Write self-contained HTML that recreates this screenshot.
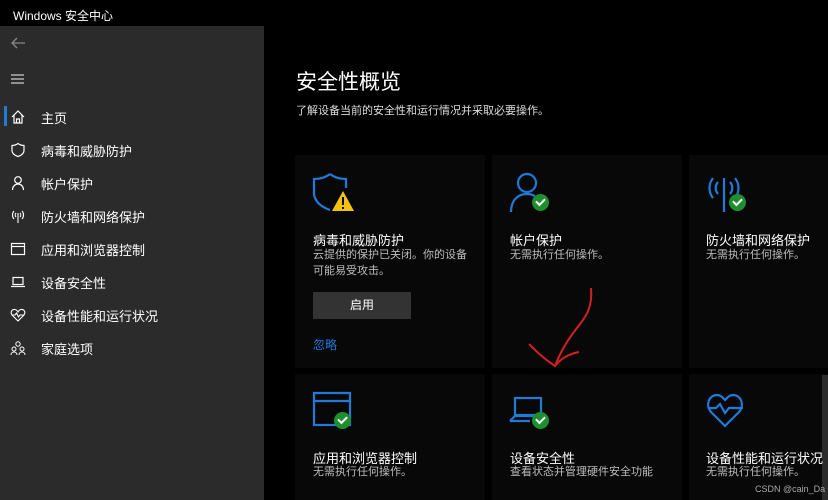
<!DOCTYPE html>
<html><head><meta charset="utf-8"><style>
*{margin:0;padding:0;box-sizing:border-box}
body{width:828px;height:500px;background:#000;overflow:hidden;position:relative;font-family:"Liberation Sans","Noto Sans CJK SC",sans-serif;color:#fff}
.tb{position:absolute;left:0;top:0;width:828px;height:26px;background:#000;font-size:12px;padding:7px 0 0 13px}
.sb{position:absolute;left:0;top:26px;width:264px;height:474px;background:#2b2b2b}
.nav{position:absolute;left:0;font-size:13px;color:#fff;width:264px;height:20px}
.nav svg{position:absolute;left:10px;top:2px}
.nav span{position:absolute;left:41px;top:1px}
.card{position:absolute;background:#080808}
.h{position:absolute;font-size:13px;color:#fff}
.s{position:absolute;font-size:11px;color:#bdbdbd;line-height:16px}
.ok{position:absolute;width:17px;height:17px;border-radius:50%;background:#1e8f2e}
.ok:after{content:"";position:absolute;left:4px;top:4px;width:7px;height:4px;border-left:2px solid #fff;border-bottom:2px solid #fff;transform:rotate(-45deg)}
</style></head><body>
<div class="tb">Windows 安全中心</div>
<div class="sb">
<svg style="position:absolute;left:10px;top:10px" width="16" height="14" viewBox="0 0 16 14"><path d="M15 7H2M7 2L2 7l5 5" stroke="#888" stroke-width="1.3" fill="none"/></svg>
<svg style="position:absolute;left:11px;top:48px" width="14" height="10"><path d="M0 1h13M0 5h13M0 9h13" stroke="#ccc" stroke-width="1.2"/></svg>
<div style="position:absolute;left:4px;top:80px;width:3px;height:20px;background:#1f7ad8"></div>
</div>
<div class="nav" style="top:107px"><svg width="16" height="16" viewBox="0 0 16 16"><path d="M2 8L8 2l6 6M4 6v8h8V6M6.5 14v-4h3v4" stroke="#fff" stroke-width="1.2" fill="none"/></svg><span>主页</span></div>
<div class="nav" style="top:140px"><svg width="16" height="16" viewBox="0 0 16 16"><path d="M8 1.5C6 3 4 3.5 2 3.5v5c0 3 3 5 6 6 3-1 6-3 6-6v-5C12 3.5 10 3 8 1.5z" stroke="#fff" stroke-width="1.2" fill="none"/></svg><span>病毒和威胁防护</span></div>
<div class="nav" style="top:173px"><svg width="16" height="16" viewBox="0 0 16 16"><circle cx="8" cy="5" r="3.3" stroke="#fff" stroke-width="1.2" fill="none"/><path d="M2.5 15c0-3.5 2.5-6 5.5-6s5.5 2.5 5.5 6" stroke="#fff" stroke-width="1.2" fill="none"/></svg><span>帐户保护</span></div>
<div class="nav" style="top:206px"><svg width="16" height="16" viewBox="0 0 16 16"><path d="M8 5v10M4 3a6 6 0 000 8M12 3a6 6 0 010 8M6 5a3 3 0 000 4M10 5a3 3 0 010 4" stroke="#fff" stroke-width="1.1" fill="none"/></svg><span>防火墙和网络保护</span></div>
<div class="nav" style="top:239px"><svg width="16" height="16" viewBox="0 0 16 16"><rect x="1.5" y="2.5" width="13" height="11" stroke="#fff" stroke-width="1.2" fill="none"/><path d="M1.5 5.5h13" stroke="#fff" stroke-width="1.2"/></svg><span>应用和浏览器控制</span></div>
<div class="nav" style="top:272px"><svg width="16" height="16" viewBox="0 0 16 16"><rect x="3" y="3.5" width="10" height="7" stroke="#fff" stroke-width="1.2" fill="none"/><path d="M1 12.5h14" stroke="#fff" stroke-width="1.2"/></svg><span>设备安全性</span></div>
<div class="nav" style="top:305px"><svg width="16" height="16" viewBox="0 0 16 16"><path d="M8 14L2 8C0 5 2 2 5 2.5 6.5 2.8 7.5 4 8 5c.5-1 1.5-2.2 3-2.5 3-.5 5 2.5 3 5.5zM2 8h3l1.5-2 2 4 1.5-2h4" stroke="#fff" stroke-width="1.1" fill="none"/></svg><span>设备性能和运行状况</span></div>
<div class="nav" style="top:338px"><svg width="16" height="16" viewBox="0 0 16 16"><circle cx="8" cy="4" r="2.2" stroke="#fff" fill="none"/><circle cx="4" cy="9" r="2" stroke="#fff" fill="none"/><circle cx="12" cy="9" r="2" stroke="#fff" fill="none"/><path d="M1 15c0-2 1.5-3 3-3s3 1 3 3M9 15c0-2 1.5-3 3-3s3 1 3 3" stroke="#fff" fill="none"/></svg><span>家庭选项</span></div>

<div style="position:absolute;left:296px;top:66px;font-size:21px">安全性概览</div>
<div style="position:absolute;left:296px;top:102px;font-size:11px;color:#ddd">了解设备当前的安全性和运行情况并采取必要操作。</div>

<div class="card" style="left:295px;top:155px;width:190px;height:213px"></div>
<div class="card" style="left:492px;top:155px;width:190px;height:213px"></div>
<div class="card" style="left:689px;top:155px;width:139px;height:213px"></div>
<div class="card" style="left:295px;top:374px;width:190px;height:126px"></div>
<div class="card" style="left:492px;top:374px;width:190px;height:126px"></div>
<div class="card" style="left:689px;top:374px;width:139px;height:126px"></div>
<div style="position:absolute;left:822px;top:375px;width:6px;height:125px;background:#2b2b2b"></div>

<svg style="position:absolute;left:311px;top:172px" width="44" height="42" viewBox="0 0 44 42"><path d="M19 2C14 6 8 7 3 7v14c0 8 7 14 16 17" stroke="#1f7ad8" stroke-width="2.2" fill="none"/><path d="M19 2c5 4 11 5 16 5v9" stroke="#1f7ad8" stroke-width="2.2" fill="none"/><path d="M32 19L21 39h22z" fill="#f4c20d"/><path d="M32 25v8M32 35v2" stroke="#000" stroke-width="2"/></svg>
<div class="h" style="left:313px;top:230px">病毒和威胁防护</div>
<div class="s" style="left:313px;top:247px">云提供的保护已关闭。你的设备<br>可能易受攻击。</div>
<div style="position:absolute;left:313px;top:292px;width:98px;height:27px;background:#333;font-size:12px;text-align:center;line-height:27px">启用</div>
<div style="position:absolute;left:313px;top:336px;font-size:12px;color:#1f7ad8">忽略</div>

<svg style="position:absolute;left:508px;top:172px" width="44" height="42"><circle cx="19" cy="11" r="9" stroke="#1f7ad8" stroke-width="2.2" fill="none"/><path d="M3 40c0-12 7-18 16-18 3 0 6 1 8 2" stroke="#1f7ad8" stroke-width="2.2" fill="none"/></svg>
<div class="ok" style="left:532px;top:194px"></div>
<div class="h" style="left:510px;top:230px">帐户保护</div>
<div class="s" style="left:510px;top:247px">无需执行任何操作。</div>

<svg style="position:absolute;left:705px;top:172px" width="44" height="42"><path d="M19 6v34M8 6a16 16 0 000 20M30 6a16 16 0 010 20M13 10a9 9 0 000 12M25 10a9 9 0 010 12" stroke="#1f7ad8" stroke-width="2.2" fill="none"/></svg>
<div class="ok" style="left:729px;top:194px"></div>
<div class="h" style="left:706px;top:230px">防火墙和网络保护</div>
<div class="s" style="left:706px;top:247px">无需执行任何操作。</div>

<svg style="position:absolute;left:311px;top:390px" width="44" height="42"><rect x="3" y="3" width="36" height="32" stroke="#1f7ad8" stroke-width="2.2" fill="none"/><path d="M3 11h36" stroke="#1f7ad8" stroke-width="2.2"/></svg>
<div class="ok" style="left:334px;top:412px"></div>
<div class="h" style="left:313px;top:448px">应用和浏览器控制</div>
<div class="s" style="left:313px;top:464px">无需执行任何操作。</div>

<svg style="position:absolute;left:508px;top:390px" width="44" height="42"><rect x="7" y="8" width="26" height="17" stroke="#1f7ad8" stroke-width="2.2" fill="none"/><path d="M2 31l5-5h20M2 31h20" stroke="#1f7ad8" stroke-width="2.2" fill="none"/></svg>
<div class="ok" style="left:532px;top:412px"></div>
<div class="h" style="left:510px;top:448px">设备安全性</div>
<div class="s" style="left:510px;top:464px">查看状态并管理硬件安全功能</div>

<svg style="position:absolute;left:705px;top:390px" width="44" height="42"><path d="M20 36L6 22C0 15 4 5 12 5c4 0 6 3 8 5 2-2 4-5 8-5 8 0 12 10 6 17zM3 18h8l4-4 5 9 4-5h14" stroke="#1f7ad8" stroke-width="2.2" fill="none"/></svg>
<div class="h" style="left:706px;top:448px">设备性能和运行状况</div>
<div class="s" style="left:706px;top:464px">无需执行任何操作。</div>
<div style="position:absolute;left:755px;top:484px;font-size:9px;color:#aaa">CSDN @cain_Da</div>

<svg style="position:absolute;left:515px;top:280px" width="90" height="100"><path d="M76 8c2 20-6 30-14 40-8 10-16 22-22 38M14 64c8 8 14 14 26 22 6-8 14-12 24-14" stroke="#d42020" stroke-width="2" fill="none"/></svg>
</body></html>
